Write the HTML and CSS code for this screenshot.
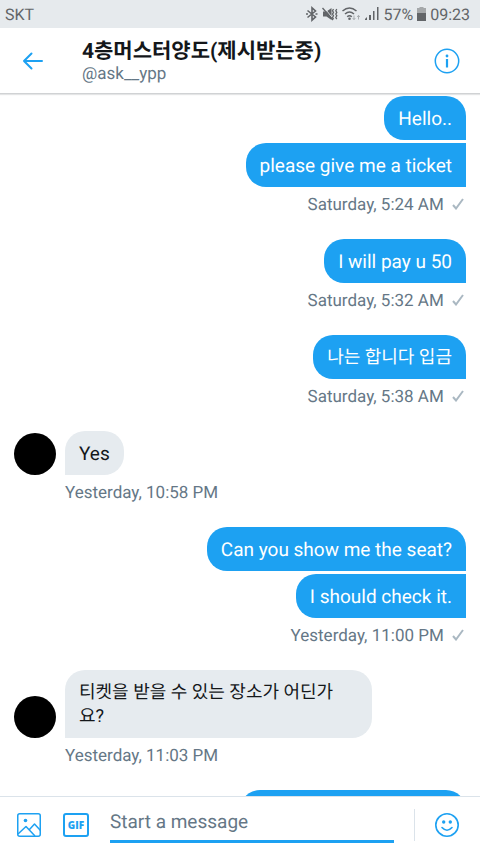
FILE: index.html
```html
<!DOCTYPE html>
<html lang="en">
<head>
<meta charset="utf-8">
<meta name="viewport" content="width=device-width, initial-scale=1">
<title>Messages</title>
<link rel="stylesheet" href="styles.css">
</head>
<body>
<div class="status">
  <span class="carrier">SKT</span>
  <svg class="status-icon" width="12" height="16" viewBox="0 0 12 16" fill="none" stroke="currentColor" stroke-width="1.6"><path d="M1.500 4.500l8 6.500L6 14.200V1.800L9.500 5l-8 6.500"/><path d="M0 8h2M9.500 8h2"/></svg>
  <svg class="status-icon" width="16" height="16" viewBox="0 0 16 16"><path d="M1 5.500h3.500L9.500 2v12l-5-3.500H1z" fill="currentColor"/><path d="M1.500 1l10 12" stroke="#e6eaed" stroke-width="1"/><path d="M0.500 2l10.500 12" stroke="currentColor" stroke-width="1.400"/><path d="M11.500 3l-1 1.700 1 1.700-1 1.700 1 1.700-1 1.700 1 1.700M14.800 3l-1 1.700 1 1.700-1 1.700 1 1.700-1 1.700 1 1.700" fill="none" stroke="currentColor" stroke-width="1.300"/></svg>
  <svg class="status-icon" width="19" height="16" viewBox="0 0 19 16" fill="none" stroke="currentColor" stroke-width="1.500"><path d="M0.500 5q7-6 14 0M3 8q4.500-4 9 0M5.200 10.800q2.300-2 4.600 0"/><circle cx="7.500" cy="12.800" r="1.300" fill="currentColor" stroke="none"/><path d="M12 9.500v4M10.700 12l1.300 1.700 1.300-1.700M16.500 13.500v-4M15.200 11l1.300-1.700 1.300 1.700" stroke="#a9adb0" stroke-width="1"/></svg>
  <svg class="status-icon" width="14" height="16" viewBox="0 0 14 16" fill="currentColor"><path d="M2 11v3H0v-1zM4 9h2v5H4zM8 5h1.500v9H8zM12 1h1.500v13H12z"/></svg>
  <span class="percent">57%</span>
  <svg class="status-icon" width="9" height="14" viewBox="0 0 9 14"><path d="M2.500 0h4v1H9v5H0V1h2.500z" fill="#a5a8aa"/><path d="M0 6h9v8H0z" fill="currentColor"/></svg>
  <span>09:23</span>
</div>
<header class="header">
  <button class="icon-button" aria-label="Back"><svg width="22" height="18" viewBox="0 0 22 18" fill="none" stroke="currentColor" stroke-width="2" stroke-linecap="round" stroke-linejoin="round"><path d="M20 9H2M9.500 1.500L2 9l7.500 7.500"/></svg></button>
  <div class="who">
    <h1 class="name">4층머스터양도(제시받는중)</h1>
    <p class="handle">@ask__ypp</p>
  </div>
  <button class="icon-button" aria-label="Conversation info"><svg width="26" height="26" viewBox="0 0 26 26" fill="none" stroke="currentColor"><circle cx="13" cy="13" r="11.700" stroke-width="1.500"/><path d="M13 11v8.500" stroke-width="2.200"/><circle cx="13" cy="8" r="1.400" fill="currentColor" stroke="none"/></svg></button>
</header>
<main class="thread">
  <section class="group sent">
    <p class="bubble">Hello..</p>
    <p class="bubble follow">please give me a ticket</p>
    <p class="time">Saturday, 5:24 AM <svg class="check" width="12" height="12" viewBox="0 0 12 12"><path d="M1 7l3 3.500L11 1"/></svg></p>
  </section>
  <section class="group sent">
    <p class="bubble">I will pay u 50</p>
    <p class="time">Saturday, 5:32 AM <svg class="check" width="12" height="12" viewBox="0 0 12 12"><path d="M1 7l3 3.500L11 1"/></svg></p>
  </section>
  <section class="group sent">
    <p class="bubble korean" lang="ko">나는 합니다 입금</p>
    <p class="time">Saturday, 5:38 AM <svg class="check" width="12" height="12" viewBox="0 0 12 12"><path d="M1 7l3 3.500L11 1"/></svg></p>
  </section>
  <section class="group received">
    <div class="row"><span class="avatar"></span><p class="bubble">Yes</p></div>
    <p class="time">Yesterday, 10:58 PM</p>
  </section>
  <section class="group sent">
    <p class="bubble">Can you show me the seat?</p>
    <p class="bubble follow">I should check it.</p>
    <p class="time">Yesterday, 11:00 PM <svg class="check" width="12" height="12" viewBox="0 0 12 12"><path d="M1 7l3 3.500L11 1"/></svg></p>
  </section>
  <section class="group received">
    <div class="row"><span class="avatar"></span><p class="bubble korean" lang="ko">티켓을 받을 수 있는 장소가 어딘가<br>요?</p></div>
    <p class="time">Yesterday, 11:03 PM</p>
  </section>
  <section class="group sent">
    <p class="bubble pending"></p>
  </section>
</main>
<form class="composer">
  <button type="button" class="tool" aria-label="Add photo"><svg width="26" height="26" viewBox="0 0 26 26" fill="none" stroke="currentColor" stroke-width="1.500" stroke-linejoin="round"><rect x="1.750" y="1.750" width="22.500" height="22.500" rx="2"/><path d="M2 22l8-7.500 9 9.500M13.500 17.500l5-5.500 6 6.500"/><circle cx="9.500" cy="8.500" r="1.800" fill="currentColor" stroke="none"/></svg></button>
  <button type="button" class="tool gif" aria-label="Add GIF"><span class="gif-box">GIF</span></button>
  <input class="field" type="text" placeholder="Start a message" aria-label="Start a message">
  <span class="divider"></span>
  <button type="button" class="tool" aria-label="Emoji"><svg width="26" height="26" viewBox="0 0 26 26" fill="none" stroke="currentColor" stroke-width="1.600" stroke-linecap="round"><circle cx="13" cy="13" r="11.200"/><path d="M8 15.500q5 5.500 10 0"/><g fill="currentColor" stroke="none"><circle cx="9.700" cy="10" r="1.700"/><circle cx="16.300" cy="10" r="1.700"/></g></svg></button>
</form>
</body>
</html>
```
FILE: styles.css
```css
* { box-sizing: border-box; }

body {
  margin: 0;
  height: 100vh;
  display: flex;
  flex-direction: column;
  background: #fff;
  color: #14171a;
  font-family: Roboto, "Noto Sans CJK KR", sans-serif;
  text-rendering: geometricPrecision;
}

h1, p { margin: 0; }

button {
  padding: 0;
  border: 0;
  background: none;
  color: #1da1f2;
  display: flex;
  align-items: center;
  justify-content: center;
}

.status {
  flex: none;
  height: 28px;
  padding: 0 10px 0 5px;
  display: flex;
  align-items: center;
  gap: 4px;
  background: #e6eaed;
  color: #626568;
  font-size: 16px;
}
.carrier { margin-right: auto; }

.header {
  flex: none;
  position: relative;
  height: 66px;
  padding: 0 19px;
  display: flex;
  align-items: center;
  border-bottom: 1px solid #d0d2d4;
  box-shadow: 0 1px 1px #e4e5e6;
}
.icon-button { width: 28px; height: 40px; }
.who { flex: 1; min-width: 0; padding: 2px 0 0 35px; }
.name { font-size: 21px; line-height: 24px; font-weight: 700; white-space: nowrap; }
.handle { font-size: 17px; line-height: 20px; color: #657786; }

.thread {
  flex: 1;
  min-height: 0;
  overflow: hidden;
  padding: 2px 14px 0;
}
.group { display: flex; flex-direction: column; margin-bottom: 23px; }
.sent { align-items: flex-end; }
.received { align-items: flex-start; }

.bubble {
  padding: 11px 14px 9px;
  border-radius: 20px 20px 0 20px;
  background: #1da1f2;
  color: #fff;
  font-size: 19px;
  line-height: 24px;
}
.korean { font-size: 18px; }
.follow { margin-top: 3px; border-radius: 20px 0 0 20px; }
.pending { width: 50%; height: 44px; }

.row { display: flex; align-items: flex-end; gap: 9px; }
.received .bubble {
  border-radius: 20px 20px 20px 0;
  background: #e6ebef;
  color: #14171a;
}
.received .korean { padding-right: 39px; }
.avatar { flex: none; width: 42px; height: 42px; border-radius: 50%; background: #000; }

.time {
  padding-top: 7px;
  font-size: 17px;
  line-height: 22px;
  color: #657786;
}
.received .time { padding-left: 51px; }
.check {
  margin: 0 2px 0 4px;
  fill: none;
  stroke: #aab8c2;
  stroke-width: 2;
}

.composer {
  flex: none;
  height: 57px;
  padding: 0 20px 0 16px;
  display: flex;
  align-items: center;
  border-top: 1px solid #dbe3ea;
}
.tool { flex: none; width: 26px; height: 40px; }
.gif { margin: 0 21px 0 21px; }
.gif-box {
  flex: none;
  width: 26px;
  height: 24px;
  border: 2px solid currentColor;
  border-radius: 3px;
  font: 900 10px/20px "Open Sans", sans-serif;
}
.field {
  flex: 1;
  min-width: 0;
  height: 36px;
  padding: 0 0 4px;
  border: 0;
  border-bottom: 3px solid #1da1f2;
  outline: 0;
  background: none;
  font: 19px Roboto, "Noto Sans CJK KR", sans-serif;
  text-rendering: inherit;
}
.field::placeholder { color: #657786; opacity: 1; }
.divider { width: 1px; height: 32px; margin: 0 19px 0 20px; background: #dbe3ea; }
```
